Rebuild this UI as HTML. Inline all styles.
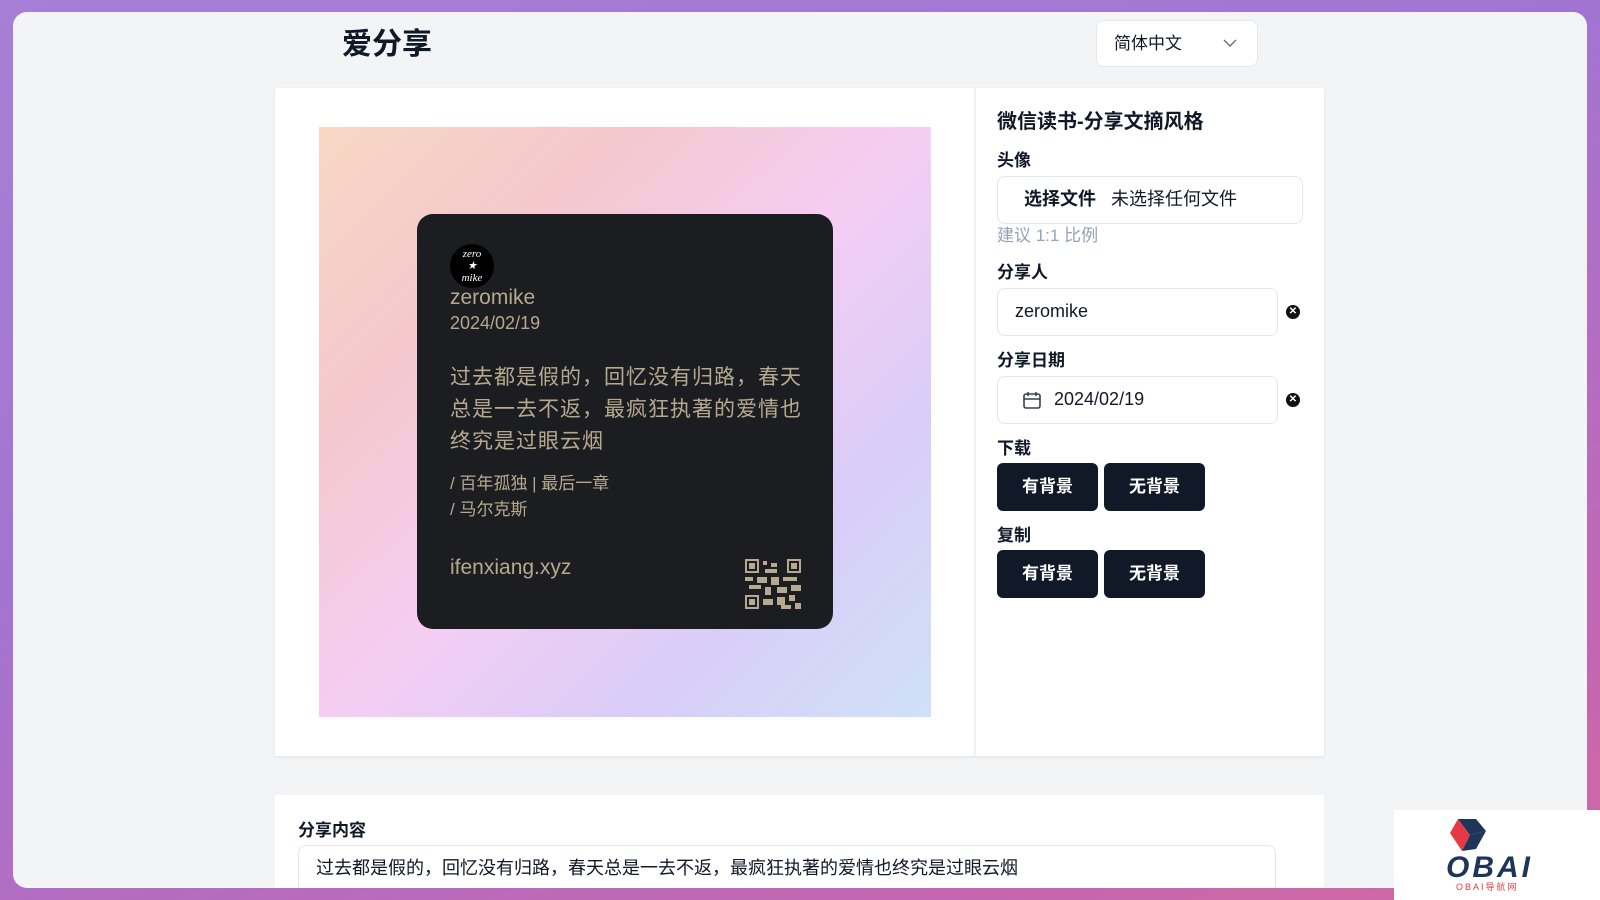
<!DOCTYPE html>
<html><head><meta charset="utf-8"><style>
*{box-sizing:border-box;margin:0;padding:0}
body{width:1600px;height:900px;overflow:hidden;background:linear-gradient(160deg,#a77fd6 0%,#a274d2 40%,#c566b0 85%,#d36aa0 100%);font-family:"Liberation Sans","Noto Sans CJK SC",sans-serif;position:relative}
.win{position:absolute;left:13px;top:12px;width:1574px;height:876px;background:#f3f4f6;border-radius:14px;overflow:hidden}
.abs{position:absolute;line-height:1.2}
.title{left:329px;top:15px;font-size:30px;font-weight:bold;color:#111827}
.sel{left:1083px;top:8px;width:162px;height:47px;background:#fff;border:1px solid #e5e7eb;border-radius:8px;font-size:17px;color:#111827;padding:13px 0 0 17px}
.panel{left:262px;top:76px;width:1049px;height:668px;background:#fff;box-shadow:0 1px 3px rgba(0,0,0,.08)}
.div{left:961px;top:76px;width:2px;height:668px;background:#f1f2f4}
.prev{left:306px;top:115px;width:612px;height:590px;background:linear-gradient(135deg,#f8d8c4 0%,#f4c8cc 25%,#f5cdf3 50%,#d9cdf8 75%,#cfe1f8 100%)}
.card{left:404px;top:202px;width:416px;height:415px;background:#1c1d21;border-radius:16px;color:#b6a98f}
.lbl{font-size:17px;font-weight:bold;color:#111827}
.inp{background:#fff;border:1px solid #e5e7eb;border-radius:8px;font-size:18px;color:#111827}
.btn{background:#111827;color:#fff;border-radius:6px;font-size:17px;font-weight:bold;text-align:center;width:101px;height:48px}
.x{width:14px;height:14px;border-radius:50%;background:#111;color:#fff;font-size:10px;line-height:14px;text-align:center;font-weight:bold}
</style></head><body>
<div class="win">
<div class="abs title">爱分享</div>
<div class="abs sel">简体中文<svg class="abs" style="left:126px;top:18px" width="14" height="9" viewBox="0 0 14 9"><path d="M1 1l6 6 6-6" fill="none" stroke="#6b7280" stroke-width="1.5"/></svg></div>
<div class="abs panel"></div>
<div class="abs div"></div>
<div class="abs prev"></div>
<div class="abs card">
 <div class="abs" style="left:33px;top:30px;width:44px;height:44px;border-radius:50%;background:#000;color:#fff;font-family:'Liberation Serif',serif;font-style:italic;font-size:11px;text-align:center;line-height:12px;padding-top:4px">zero<br>★<br>mike</div>
 <div class="abs" style="left:33px;top:71px;font-size:21px">zeromike</div>
 <div class="abs" style="left:33px;top:99px;font-size:18px">2024/02/19</div>
 <div class="abs" style="left:33px;top:148px;width:365px;font-size:21px;letter-spacing:1px;line-height:32px">过去都是假的，回忆没有归路，春天总是一去不返，最疯狂执著的爱情也终究是过眼云烟</div>
 <div class="abs" style="left:33px;top:257px;font-size:17px;line-height:26px">/ 百年孤独 | 最后一章<br>/ 马尔克斯</div>
 <div class="abs" style="left:33px;top:341px;font-size:21px">ifenxiang.xyz</div>
 <svg class="abs" style="left:328px;top:345px" width="56" height="50" viewBox="0 0 56 50"><g fill="#b6a98f"><rect x="0" y="0" width="14" height="14"/><rect x="42" y="0" width="14" height="14"/><rect x="0" y="36" width="14" height="14"/></g><g fill="#1c1d21"><rect x="2" y="2" width="10" height="10"/><rect x="44" y="2" width="10" height="10"/><rect x="2" y="38" width="10" height="10"/></g><g fill="#b6a98f"><rect x="4" y="4" width="6" height="6"/><rect x="46" y="4" width="6" height="6"/><rect x="4" y="40" width="6" height="6"/><rect x="18" y="2" width="4" height="4"/><rect x="26" y="4" width="6" height="4"/><rect x="20" y="10" width="12" height="4"/><rect x="0" y="18" width="8" height="4"/><rect x="12" y="18" width="10" height="6"/><rect x="26" y="18" width="8" height="8"/><rect x="38" y="18" width="14" height="4"/><rect x="4" y="26" width="12" height="4"/><rect x="20" y="28" width="6" height="8"/><rect x="32" y="28" width="10" height="6"/><rect x="46" y="26" width="10" height="6"/><rect x="18" y="40" width="10" height="6"/><rect x="32" y="38" width="8" height="8"/><rect x="44" y="36" width="6" height="6"/><rect x="50" y="44" width="6" height="6"/><rect x="36" y="46" width="10" height="4"/></g></svg>
</div>

<div class="abs" style="left:984px;top:98px;font-size:20px;font-weight:bold;color:#111827">微信读书-分享文摘风格</div>
<div class="abs lbl" style="left:984px;top:139px">头像</div>
<div class="abs inp" style="left:984px;top:164px;width:306px;height:48px;padding:12px 0 0 26px"><b>选择文件</b>&nbsp;&nbsp; 未选择任何文件</div>
<div class="abs" style="left:984px;top:214px;font-size:17px;color:#94a3b8">建议 1:1 比例</div>
<div class="abs lbl" style="left:984px;top:251px">分享人</div>
<div class="abs inp" style="left:984px;top:276px;width:281px;height:48px;padding:12px 0 0 17px">zeromike</div>
<div class="abs x" style="left:1273px;top:293px">✕</div>
<div class="abs lbl" style="left:984px;top:339px">分享日期</div>
<div class="abs inp" style="left:984px;top:364px;width:281px;height:48px;padding:12px 0 0 56px">2024/02/19<svg class="abs" style="left:24px;top:13px" width="20" height="20" viewBox="0 0 20 20"><rect x="2" y="4" width="16" height="14" rx="2" fill="none" stroke="#374151" stroke-width="1.6"/><path d="M2 9h16M6 2v4M14 2v4" stroke="#374151" stroke-width="1.6"/></svg></div>
<div class="abs x" style="left:1273px;top:381px">✕</div>
<div class="abs lbl" style="left:984px;top:427px">下载</div>
<div class="abs btn" style="left:984px;top:451px;line-height:48px">有背景</div>
<div class="abs btn" style="left:1091px;top:451px;line-height:48px">无背景</div>
<div class="abs lbl" style="left:984px;top:514px">复制</div>
<div class="abs btn" style="left:984px;top:538px;line-height:48px">有背景</div>
<div class="abs btn" style="left:1091px;top:538px;line-height:48px">无背景</div>

<div class="abs" style="left:262px;top:783px;width:1049px;height:120px;background:#fff"></div>
<div class="abs lbl" style="left:285px;top:809px">分享内容</div>
<div class="abs inp" style="left:285px;top:833px;width:978px;height:60px;padding:12px 0 0 17px">过去都是假的，回忆没有归路，春天总是一去不返，最疯狂执著的爱情也终究是过眼云烟</div>
</div>
<div class="abs" style="left:1394px;top:810px;width:206px;height:90px;background:#fff">
<svg class="abs" style="left:52px;top:7px" width="44" height="36" viewBox="0 0 44 36"><path d="M12 2L4 16l12 18 8-16z" fill="#e63946"/><path d="M12 2h18l10 12-16 4z" fill="#1d3557"/><path d="M24 18l16-4-10 18-14 2z" fill="#1d3557"/></svg>
<div class="abs" style="left:52px;top:40px;font-size:30px;font-weight:bold;font-style:italic;color:#1d3557;letter-spacing:3px">OBAI</div>
<div class="abs" style="left:62px;top:72px;font-size:9px;color:#e63946;letter-spacing:2px">OBAI导航网</div>
</div>
</body></html>
